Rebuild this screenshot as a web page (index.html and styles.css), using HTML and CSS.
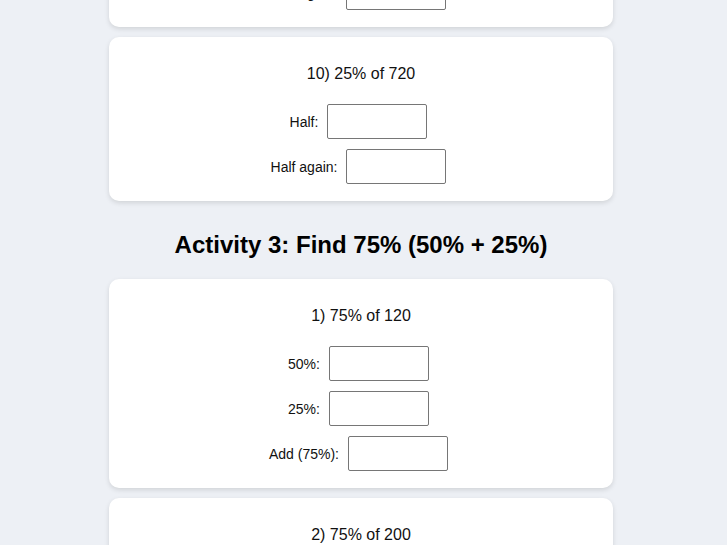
FILE: index.html
```html
<!DOCTYPE html>
<html lang="en">
<head>
<meta charset="utf-8">
<title>Percentages Worksheet</title>
<link rel="stylesheet" href="styles.css">
</head>
<body>
<main class="sheet">
  <section class="card">
    <p class="question">9) 25% of 640</p>
    <div class="row"><label class="lbl">Half:</label><input class="answer" type="text"></div>
    <div class="row"><label class="lbl">Half again:</label><input class="answer" type="text"></div>
  </section>
  <section class="card">
    <p class="question">10) 25% of 720</p>
    <div class="row"><label class="lbl">Half:</label><input class="answer" type="text"></div>
    <div class="row"><label class="lbl">Half again:</label><input class="answer" type="text"></div>
  </section>

  <h2 class="activity">Activity 3: Find 75% (50% + 25%)</h2>

  <section class="card">
    <p class="question">1) 75% of 120</p>
    <div class="row"><label class="lbl">50%:</label><input class="answer" type="text"></div>
    <div class="row"><label class="lbl">25%:</label><input class="answer" type="text"></div>
    <div class="row"><label class="lbl">Add (75%):</label><input class="answer" type="text"></div>
  </section>
  <section class="card">
    <p class="question">2) 75% of 200</p>
    <div class="row"><label class="lbl">50%:</label><input class="answer" type="text"></div>
    <div class="row"><label class="lbl">25%:</label><input class="answer" type="text"></div>
    <div class="row"><label class="lbl">Add (75%):</label><input class="answer" type="text"></div>
  </section>
  <section class="card">
    <p class="question">3) 75% of 80</p>
    <div class="row"><label class="lbl">50%:</label><input class="answer" type="text"></div>
    <div class="row"><label class="lbl">25%:</label><input class="answer" type="text"></div>
    <div class="row"><label class="lbl">Add (75%):</label><input class="answer" type="text"></div>
  </section>
</main>
</body>
</html>
```

FILE: styles.css
```css
html, body {
  margin: 0;
  padding: 0;
}

body {
  background: #edf0f5;
  font-family: "Liberation Sans", Arial, sans-serif;
  color: #111;
  padding-right: 5px;
  overflow: hidden;
}

.sheet {
  width: 504px;
  margin: -137px auto 0;
}

.card {
  background: #ffffff;
  border-radius: 10px;
  box-shadow: 0 2px 5px rgba(0, 0, 0, 0.12);
  padding: 12px 20px;
  margin: 0 0 10px;
  text-align: center;
}

.question {
  font-size: 16px;
  line-height: 20px;
  margin: 15px 0 15px;
}

.row {
  display: flex;
  justify-content: center;
  align-items: center;
}

.lbl {
  font-size: 14px;
  margin-right: 4px;
}

.answer {
  box-sizing: border-box;
  width: 100px;
  height: 35px;
  margin: 5px;
  border: 1px solid #767676;
  border-radius: 2px;
  padding: 6px;
  font-size: 14px;
  background: #fff;
}

.activity {
  font-size: 24px;
  line-height: 28px;
  font-weight: bold;
  text-align: center;
  margin: 30px 0 20px;
  color: #000;
}
```
